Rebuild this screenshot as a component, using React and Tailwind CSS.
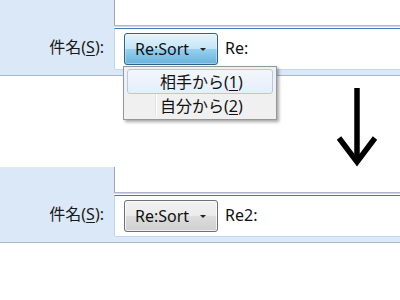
import React from "react";

const FONT = "[font-family:'Noto_Sans','Noto_Sans_CJK_JP',sans-serif]";

function Caret() {
  return (
    <span className="inline-block w-0 h-0 border-l-[3px] border-r-[3px] border-t-[3px] border-l-transparent border-r-transparent border-t-[#222] ml-[11px] mt-[1px]" />
  );
}

function Section({ pressed, value, children }) {
  return (
    <div className="relative flex h-[76px] border-b border-[#a9b7c9] bg-[#dae8f7]">
      <div className="w-[114px] shrink-0 flex items-start justify-end pr-[10px] pt-[37px]">
        <span className="text-[16px] leading-[20px] text-[#1a1a1a]">
          件名(<span className="underline underline-offset-2">S</span>):
        </span>
      </div>
      <div className="flex-1 flex flex-col">
        <div className="h-[25px] bg-white border-l border-[#a5a5a5]" />
        <div className="h-px bg-[#b3b3d6]" />
        <div className="h-px bg-[#d4d4ec]" />
        <div className="h-px bg-white" />
        <div className="h-[42px] bg-white border-t border-l border-b border-t-[#3d7fb6] border-l-[#bcd5ee] border-b-[#c3d9ef] rounded-bl-[2px] flex items-start pl-[9px] pt-[4px]">
          <div
            className={
              "h-[32px] w-[94px] rounded-[3px] border flex items-center pl-[10px] text-[16px] text-[#111] " +
              (pressed
                ? "border-[#2c628b] bg-[linear-gradient(to_bottom,#e5f4fc,#c4e5f6_50%,#98d1ef_50%,#68b3db)] shadow-[inset_0_0_0_1px_rgba(255,255,255,0.35)]"
                : "border-[#707070] bg-[linear-gradient(to_bottom,#f2f2f2,#ebebeb_50%,#dddddd_50%,#cfcfcf)] shadow-[inset_0_0_0_1px_rgba(255,255,255,0.7)]")
            }
          >
            <span className="leading-[20px]">Re:Sort</span>
            <Caret />
          </div>
          <span className="ml-[7px] mt-[5px] text-[16px] leading-[20px] text-[#111]">{value}</span>
        </div>
      </div>
      {children}
    </div>
  );
}

function Menu() {
  return (
    <div className="absolute left-[123px] top-[66px] w-[154px] h-[54px] border border-[#979797] bg-[#f0f0f0] shadow-[2px_2px_3px_rgba(0,0,0,0.35)] p-[2px]">
      <div className="absolute left-[31px] top-[2px] bottom-[2px] w-px bg-[#e2e3e3]" />
      <div className="absolute left-[32px] top-[2px] bottom-[2px] w-px bg-white" />
      <div className="relative h-[25px] ml-[1px] mr-[1px] rounded-[3px] border border-[#aecbee] bg-[linear-gradient(to_bottom,#f3f7fc,#e6eefa)] flex items-center pl-[32px] text-[16px] text-[#111]">
        <span className="leading-[20px]">相手から(<span className="underline underline-offset-2">1</span>)</span>
      </div>
      <div className="relative h-[24px] ml-[1px] flex items-center pl-[33px] text-[16px] text-[#111]">
        <span className="leading-[20px]">自分から(<span className="underline underline-offset-2">2</span>)</span>
      </div>
    </div>
  );
}

export default function App() {
  return (
    <div className={"w-[400px] h-[300px] bg-white overflow-hidden " + FONT}>
      <Section pressed value="Re:">
        <Menu />
      </Section>
      <div className="h-[91px] flex justify-start pl-[335px] pt-[11px]">
        <svg width="44" height="81" viewBox="0 0 44 81" className="overflow-visible">
          <path d="M22 1 L22 72" stroke="#000" strokeWidth="5.5" fill="none" />
          <path d="M4 51 L22 75 L40 51" stroke="#000" strokeWidth="5.5" fill="none" strokeLinejoin="miter" />
        </svg>
      </div>
      <Section pressed={false} value="Re2:" />
    </div>
  );
}
